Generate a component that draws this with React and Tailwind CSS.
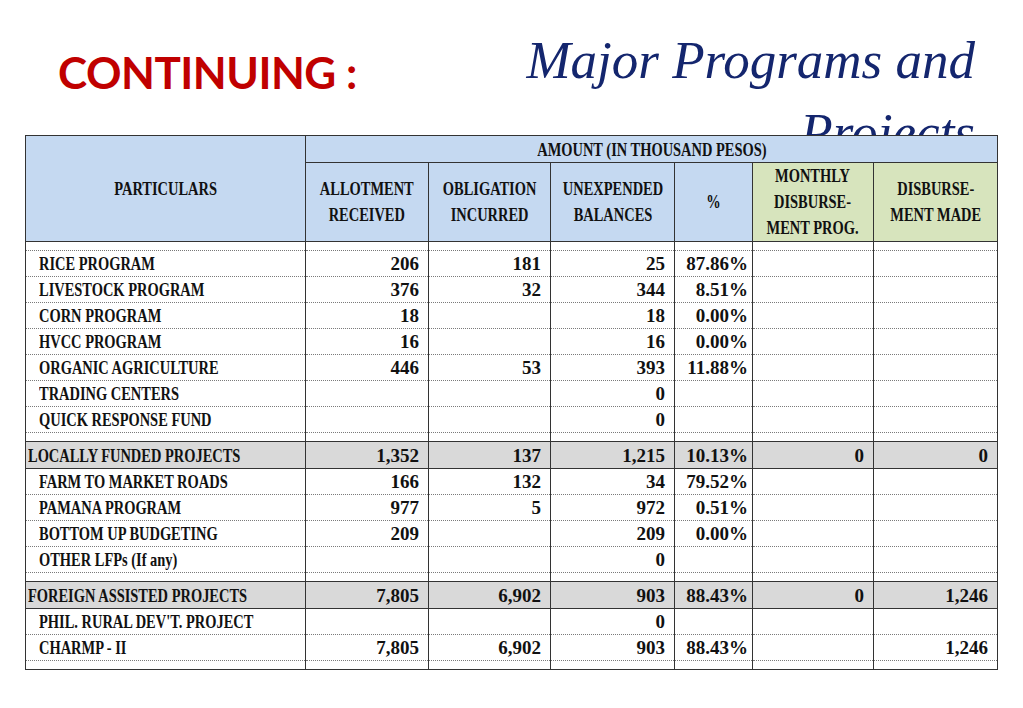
import React from "react";

const ROWS = [
  { kind: "spacer" },
  { t: "RICE PROGRAM", a: "206", o: "181", u: "25", p: "87.86%" },
  { t: "LIVESTOCK PROGRAM", a: "376", o: "32", u: "344", p: "8.51%" },
  { t: "CORN PROGRAM", a: "18", u: "18", p: "0.00%" },
  { t: "HVCC PROGRAM", a: "16", u: "16", p: "0.00%" },
  { t: "ORGANIC AGRICULTURE", a: "446", o: "53", u: "393", p: "11.88%" },
  { t: "TRADING CENTERS", u: "0" },
  { t: "QUICK RESPONSE FUND", u: "0" },
  { kind: "spacer" },
  { kind: "group", t: "LOCALLY FUNDED PROJECTS", a: "1,352", o: "137", u: "1,215", p: "10.13%", m: "0", d: "0" },
  { t: "FARM TO MARKET ROADS", a: "166", o: "132", u: "34", p: "79.52%" },
  { t: "PAMANA PROGRAM", a: "977", o: "5", u: "972", p: "0.51%" },
  { t: "BOTTOM UP BUDGETING", a: "209", u: "209", p: "0.00%" },
  { t: "OTHER LFPs (If any)", u: "0" },
  { kind: "spacer" },
  { kind: "group", t: "FOREIGN ASSISTED PROJECTS", a: "7,805", o: "6,902", u: "903", p: "88.43%", m: "0", d: "1,246" },
  { t: "PHIL. RURAL DEV'T. PROJECT", u: "0" },
  { t: "CHARMP - II", a: "7,805", o: "6,902", u: "903", p: "88.43%", d: "1,246" },
  { kind: "spacer" },
];

const WIDTHS = [280, 123, 122, 124, 78, 121, 124];

// squeezed serif, like the condensed Cambria of the slide
function Sq({ children, center }) {
  if (center) {
    return (
      <div className="flex justify-center">
        <span className="shrink-0 scale-x-[0.76] whitespace-nowrap text-center">{children}</span>
      </div>
    );
  }
  return <span className="inline-block origin-left scale-x-[0.76] whitespace-nowrap">{children}</span>;
}

function HeadCell({ children, className = "", ...rest }) {
  return (
    <th className={"border border-[#333] p-0 align-middle font-bold " + className} {...rest}>
      <Sq center>{children}</Sq>
    </th>
  );
}

function BodyRow({ r }) {
  if (r.kind === "spacer") {
    return (
      <tr className="h-[9px]">
        {WIDTHS.map((w, i) => (
          <td key={i} className="border-b border-dotted border-[#777] p-0" />
        ))}
      </tr>
    );
  }
  const group = r.kind === "group";
  const td = group
    ? "h-[27px] border-y border-[#333] bg-[#d9d9d9] p-0"
    : "h-[26px] border-b border-dotted border-[#7a7a7a] p-0";
  const nums = [r.a, r.o, r.u, r.p, r.m, r.d];
  return (
    <tr>
      <td className={td + (group ? " pl-[2px]" : " pl-[13px]")}>
        <Sq>{r.t}</Sq>
      </td>
      {nums.map((n, i) => (
        <td key={i} className={td + " text-right " + (i === 3 ? "pr-[4px]" : "pr-[9px]")}>
          {n}
        </td>
      ))}
    </tr>
  );
}

export default function App() {
  return (
    <div className="relative h-[708px] w-[1023px] overflow-hidden bg-white">
      <div className="flex h-[135px] items-start">
        <div className="pl-[58px] pt-[50px] font-['Lato',sans-serif] text-[44px] font-bold leading-none tracking-[-0.5px] text-[#c00000]">
          CONTINUING :
        </div>
        <div className="ml-auto whitespace-nowrap pr-[48px] pt-[24px] text-right font-['Liberation_Serif',serif] text-[53px] italic leading-[72px] text-[#14266e]">
          Major Programs and
          <br />
          Projects
        </div>
      </div>

      <table className="relative z-10 ml-[25px] w-[972px] table-fixed border-collapse border border-[#333] bg-white font-['Liberation_Serif',serif] text-[19px] font-bold leading-none text-[#111]">
        <colgroup>
          {WIDTHS.map((w, i) => (
            <col key={i} className="border-x border-[#333]" style={{ width: w }} />
          ))}
        </colgroup>
        <thead>
          <tr className="h-[27px] bg-[#c5d9f1]">
            <HeadCell rowSpan={2}>PARTICULARS</HeadCell>
            <HeadCell colSpan={6}>AMOUNT (IN THOUSAND PESOS)</HeadCell>
          </tr>
          <tr className="h-[78px] leading-[26px]">
            <HeadCell className="bg-[#c5d9f1]">
              ALLOTMENT
              <br />
              RECEIVED
            </HeadCell>
            <HeadCell className="bg-[#c5d9f1]">
              OBLIGATION
              <br />
              INCURRED
            </HeadCell>
            <HeadCell className="bg-[#c5d9f1]">
              UNEXPENDED
              <br />
              BALANCES
            </HeadCell>
            <HeadCell className="bg-[#c5d9f1]">%</HeadCell>
            <HeadCell className="bg-[#d7e4bd]">
              MONTHLY
              <br />
              DISBURSE-
              <br />
              MENT PROG.
            </HeadCell>
            <HeadCell className="bg-[#d7e4bd]">
              DISBURSE-
              <br />
              MENT MADE
            </HeadCell>
          </tr>
        </thead>
        <tbody>
          {ROWS.map((r, i) => (
            <BodyRow key={i} r={r} />
          ))}
        </tbody>
      </table>
    </div>
  );
}
